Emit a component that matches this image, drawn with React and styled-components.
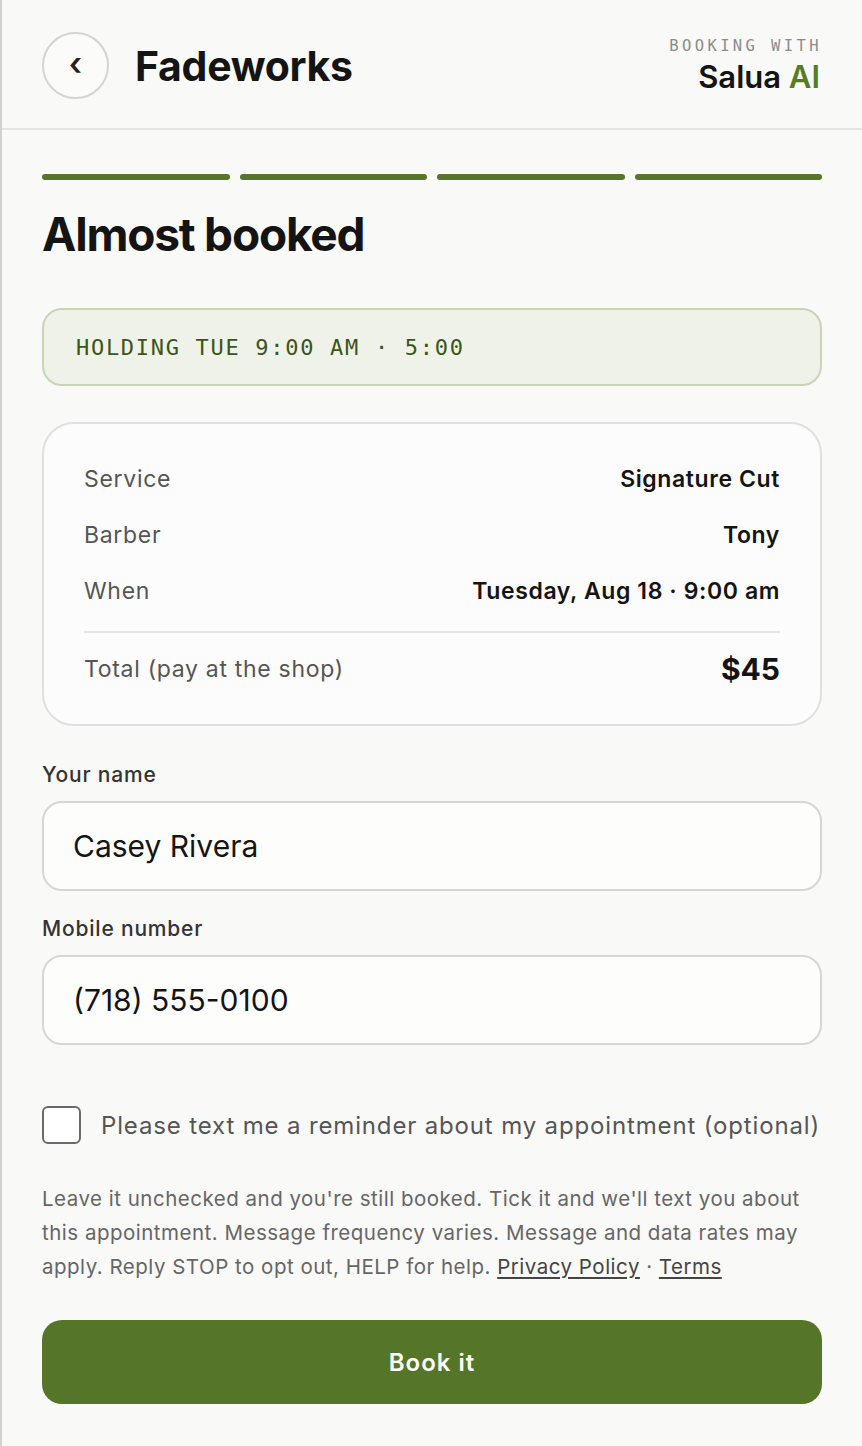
import React from "react";
import styled, { createGlobalStyle } from "styled-components";

const GlobalStyle = createGlobalStyle`
  * { box-sizing: border-box; }
  body {
    margin: 0;
    background: #f9f9f7;
    font-family: Inter, "Noto Sans", sans-serif;
    color: #141414;
  }
`;

const Page = styled.div`
  min-height: 1446px;
  border-left: 2px solid #d2d2d0;
  background: #f9f9f7;
`;

const Header = styled.header`
  height: 130px;
  display: flex;
  align-items: center;
  justify-content: space-between;
  padding: 0 40px;
  border-bottom: 2px solid #e4e4e2;
`;

const Brand = styled.div`
  display: flex;
  align-items: center;
  gap: 26px;
  padding-top: 3px;
`;

const BackButton = styled.button`
  width: 67px;
  height: 67px;
  border-radius: 50%;
  border: 2px solid #d4d4d2;
  background: #fbfbfa;
  display: flex;
  align-items: center;
  justify-content: center;
  color: #222;
  font-family: inherit;
  font-size: 32px;
  font-weight: 600;
  padding: 0 0 5px;
  cursor: pointer;
`;

const ShopName = styled.h1`
  margin: 0;
  font-size: 41px;
  font-weight: 700;
  letter-spacing: -0.3px;
  color: #141414;
`;

const Powered = styled.div`
  display: flex;
  flex-direction: column;
  align-items: flex-end;
  gap: 3px;
  padding-top: 4px;
`;

const PoweredLabel = styled.span`
  font-family: "DejaVu Sans Mono", monospace;
  font-size: 15.5px;
  letter-spacing: 3.4px;
  color: #8c8c8a;
`;

const PoweredName = styled.span`
  font-size: 31px;
  font-weight: 600;
  color: #141414;
  margin-right: 2px;
  span { color: #587a2a; }
`;

const Main = styled.main`
  padding: 44px 40px 40px;
`;

const Steps = styled.div`
  display: grid;
  grid-template-columns: repeat(4, 1fr);
  gap: 10px;
`;

const Step = styled.div`
  height: 6px;
  border-radius: 3px;
  background: ${p => (p.$done ? "#587629" : "#e2e2de")};
`;

const Title = styled.h2`
  margin: 24px 0 0;
  font-size: 46px;
  font-weight: 700;
  letter-spacing: -1.2px;
  line-height: 60px;
  color: #141414;
`;

const Hold = styled.div`
  margin-top: 44px;
  height: 78px;
  border: 2px solid #c9d4b7;
  border-radius: 20px;
  background: #eef2e8;
  display: flex;
  align-items: center;
  padding: 0 32px;
  font-family: "DejaVu Sans Mono", monospace;
  font-size: 22px;
  letter-spacing: 1.7px;
  color: #3b5518;
`;

const Summary = styled.section`
  margin-top: 36px;
  border: 2px solid #e0e0de;
  border-radius: 32px;
  background: #fcfcfc;
  padding: 27px 40px 27px;
`;

const Row = styled.div`
  display: flex;
  justify-content: space-between;
  align-items: center;
  height: 56px;
`;

const Label = styled.span`
  font-size: 23px;
  letter-spacing: 0.7px;
  color: #555;
`;

const Value = styled.span`
  color: #141414;
  font-size: ${p => (p.$big ? "30px" : "23px")};
  font-weight: ${p => (p.$big ? 700 : 600)};
  letter-spacing: ${p => (p.$big ? "0" : "0.6px")};
`;

const Divider = styled.hr`
  border: 0;
  border-top: 2px solid #e6e6e4;
  margin: 12px 0 8px;
`;

const Field = styled.label`
  display: block;
  margin-top: ${p => (p.$first ? "36px" : "25px")};
`;

const FieldLabel = styled.span`
  display: block;
  font-size: 21px;
  font-weight: 500;
  letter-spacing: 0.8px;
  color: #333;
  margin-bottom: 14px;
`;

const Input = styled.input`
  width: 100%;
  height: 90px;
  border: 2px solid #d6d6d4;
  border-radius: 20px;
  background: #fdfdfc;
  padding: 0 29px;
  font-family: inherit;
  font-size: 30px;
  color: #141414;
  outline: none;
`;

const Check = styled.label`
  margin-top: 61px;
  display: flex;
  align-items: center;
  gap: 20px;
`;

const Box = styled.span`
  width: 39px;
  height: 38px;
  border: 2px solid #6a6a68;
  border-radius: 6px;
  background: #fff;
  flex: none;
`;

const CheckText = styled.span`
  font-size: 24px;
  letter-spacing: 0.85px;
  color: #555;
  white-space: nowrap;
`;

const Fine = styled.p`
  margin: 38px 0 0;
  font-size: 20.5px;
  letter-spacing: 0.5px;
  line-height: 34px;
  color: #666;
  a {
    color: #444;
    text-decoration: underline;
    text-underline-offset: 3px;
  }
`;

const BookButton = styled.button`
  margin-top: 36px;
  width: 100%;
  height: 84px;
  border: 0;
  border-radius: 20px;
  background: #557529;
  color: #fff;
  font-family: inherit;
  font-size: 24px;
  font-weight: 600;
  letter-spacing: 1px;
  cursor: pointer;
`;

const rows = [
  ["Service", "Signature Cut"],
  ["Barber", "Tony"],
  ["When", "Tuesday, Aug 18 · 9:00 am"],
];

export default function App() {
  return (
    <Page>
      <GlobalStyle />
      <Header>
        <Brand>
          <BackButton aria-label="Back">‹</BackButton>
          <ShopName>Fadeworks</ShopName>
        </Brand>
        <Powered>
          <PoweredLabel>BOOKING WITH</PoweredLabel>
          <PoweredName>Salua <span>AI</span></PoweredName>
        </Powered>
      </Header>
      <Main>
        <Steps>
          {[0, 1, 2, 3].map(i => <Step key={i} $done />)}
        </Steps>
        <Title>Almost booked</Title>
        <Hold>HOLDING TUE 9:00 AM · 5:00</Hold>
        <Summary>
          {rows.map(([l, v]) => (
            <Row key={l}>
              <Label>{l}</Label>
              <Value>{v}</Value>
            </Row>
          ))}
          <Divider />
          <Row>
            <Label>Total (pay at the shop)</Label>
            <Value $big>$45</Value>
          </Row>
        </Summary>
        <Field $first>
          <FieldLabel>Your name</FieldLabel>
          <Input defaultValue="Casey Rivera" />
        </Field>
        <Field>
          <FieldLabel>Mobile number</FieldLabel>
          <Input defaultValue="(718) 555-0100" />
        </Field>
        <Check>
          <Box />
          <CheckText>Please text me a reminder about my appointment (optional)</CheckText>
        </Check>
        <Fine>
          Leave it unchecked and you're still booked. Tick it and we'll text you about
          this appointment. Message frequency varies. Message and data rates may
          apply. Reply STOP to opt out, HELP for help. <a href="#privacy">Privacy Policy</a> · <a href="#terms">Terms</a>
        </Fine>
        <BookButton>Book it</BookButton>
      </Main>
    </Page>
  );
}
